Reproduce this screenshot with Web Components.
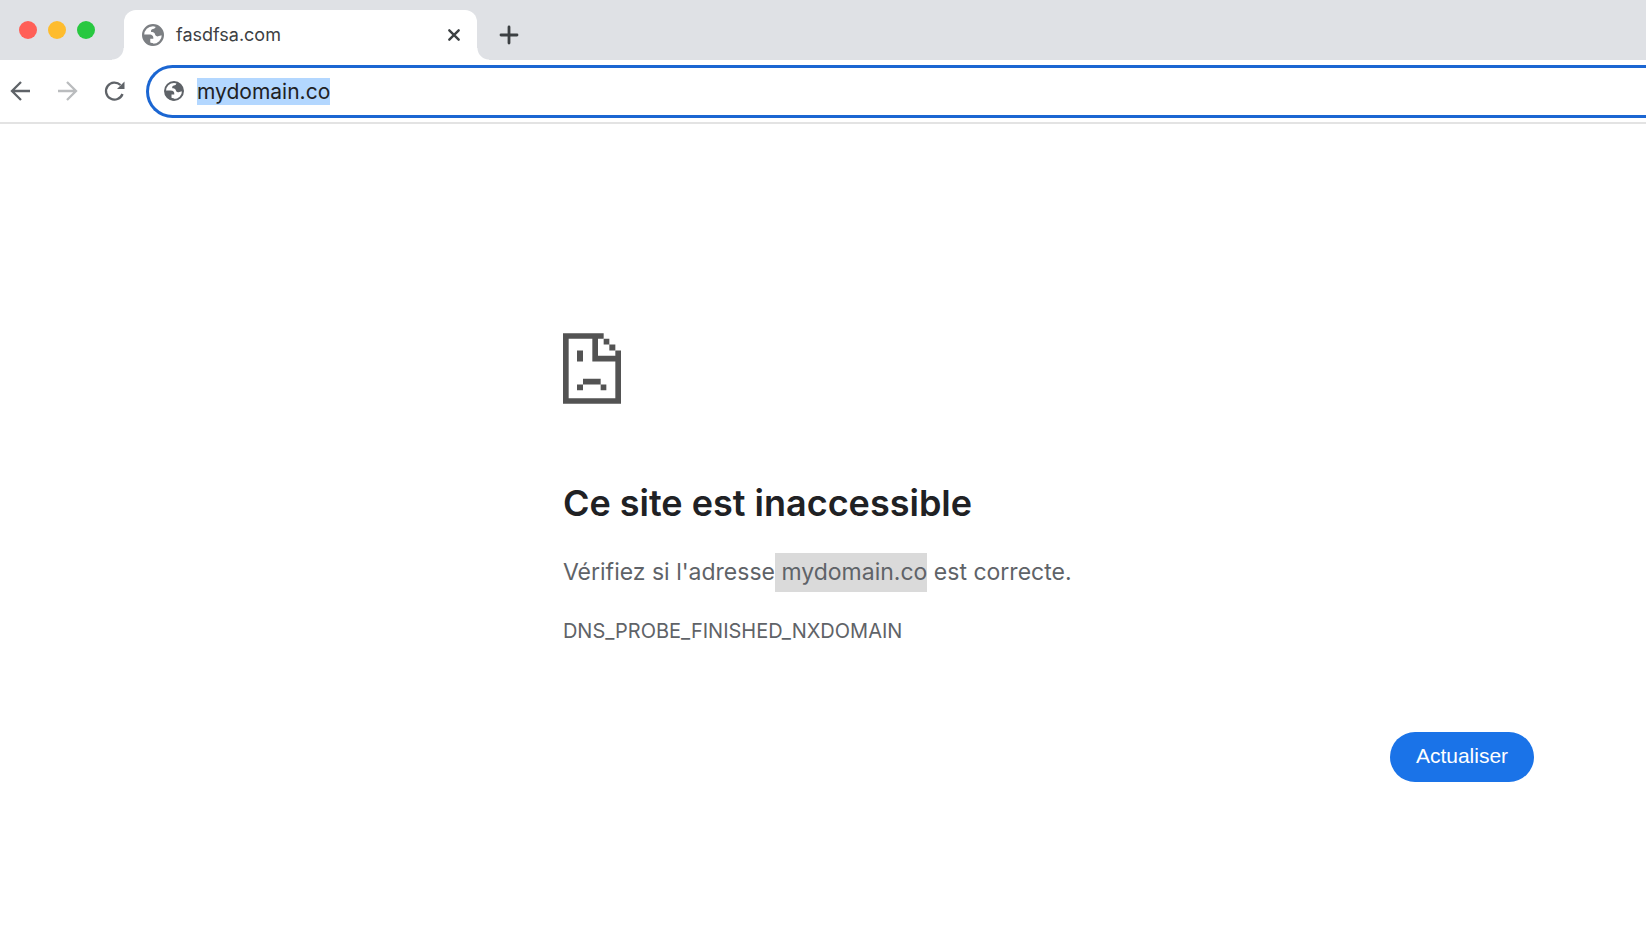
<!DOCTYPE html>
<html lang="fr">
<head>
<meta charset="utf-8">
<title>fasdfsa.com</title>
<style>
  body { margin: 0; background: #fff; font-family: Inter, "Liberation Sans", sans-serif; color: #202124; }
</style>
</head>
<body>
<browser-window>
  <tab-strip slot="tabs"><browser-tab>fasdfsa.com</browser-tab></tab-strip>
  <nav-toolbar slot="toolbar"><address-bar value="mydomain.co"></address-bar></nav-toolbar>
  <error-page>
    <span slot="title">Ce site est inaccessible</span>
    <span slot="summary">Vérifiez si l'adresse<mark-host>&nbsp;mydomain.co</mark-host> est correcte.</span>
    <span slot="code">DNS_PROBE_FINISHED_NXDOMAIN</span>
    <reload-button slot="action">Actualiser</reload-button>
  </error-page>
</browser-window>
<script>
const define = (name, html, setup) => {
  const template = document.createElement('template');
  template.innerHTML = html;
  customElements.define(name, class extends HTMLElement {
    constructor() {
      super();
      this.attachShadow({ mode: 'open' }).append(template.content.cloneNode(true));
    }
    connectedCallback() { if (setup) setup(this); }
  });
};

define('globe-icon', `
  <style>
    :host { display: block; flex: none; width: 20px; height: 20px; color: #5f6368; }
    svg { display: block; width: 100%; height: 100%; }
  </style>
  <svg viewBox="0 0 20 20" aria-hidden="true">
    <circle cx="10" cy="10" r="9" fill="#fff" stroke="currentColor" stroke-width="2"/>
    <path fill="currentColor" d="M1 9.500H6.500C9.500 9.500 10.500 11 10.300 13.500H7.500V16.800C8.500 17.300 9.500 17.500 10.500 17.500L9 19.500C4 18.500 1 15 1 9.500Z"/>
    <path fill="currentColor" d="M12.500 1.500C12.500 3.500 11.500 4.200 9.800 4.500C8.300 4.800 8 6 8.300 7.200C9.500 7.200 11 7.500 11.500 8.500C12 10 12.500 11.300 14 11.300C15.300 11.300 15.500 10 18.500 10.500C19.500 6 16.500 2.500 12.500 1.500Z"/>
  </svg>`);

define('tab-strip', `
  <style>
    :host { display: flex; height: 50px; padding-top: 10px; background: #dfe1e5; }
    .lights { display: flex; gap: 11px; padding: 11px 29px 0 19px; }
    .lights i { width: 18px; height: 18px; border-radius: 50%; }
    .close { background: #ff5f57; } .min { background: #febc2e; } .max { background: #28c840; }
    button { align-self: center; margin-left: 22px; padding: 0; border: 0; background: none; color: #3c4043; }
    svg { display: block; width: 20px; height: 20px; }
  </style>
  <div class="lights"><i class="close"></i><i class="min"></i><i class="max"></i></div>
  <slot></slot>
  <button aria-label="Nouvel onglet"><svg viewBox="0 0 20 20" stroke="currentColor" stroke-width="2.800" stroke-linecap="round"><path d="M10 2V18M2 10H18"/></svg></button>`);

define('browser-tab', `
  <style>
    :host { position: relative; display: flex; align-items: center; box-sizing: border-box; width: 353px; padding: 0 16px 0 18px;
      background: #fff; border-radius: 12px 12px 0 0; color: #3c4043; font-size: 18px; line-height: 24px; }
    :host::before, :host::after { content: ""; position: absolute; bottom: 0; width: 12px; height: 12px; }
    :host::before { right: 100%; background: radial-gradient(circle at 0 0, transparent 11px, #fff 12px); }
    :host::after { left: 100%; background: radial-gradient(circle at 100% 0, transparent 11px, #fff 12px); }
    globe-icon { width: 22px; height: 22px; margin-right: 12px; color: #7c7f83; }
    .title { flex: 1; }
    button { padding: 0; border: 0; background: none; color: #3c4043; }
    svg { display: block; width: 14px; height: 14px; }
  </style>
  <globe-icon></globe-icon><span class="title"><slot></slot></span>
  <button aria-label="Fermer"><svg viewBox="0 0 14 14" stroke="currentColor" stroke-width="2.400" stroke-linecap="round"><path d="M2.300 2.300L11.700 11.700M11.700 2.300L2.300 11.700"/></svg></button>`);

define('nav-toolbar', `
  <style>
    :host { display: flex; align-items: center; height: 62px; padding-left: 10px; background: #fff; border-bottom: 2px solid #e3e3e3; }
    button { flex: none; margin-right: 26px; padding: 0; border: 0; background: none; color: #5f6368; }
    button:disabled { color: #babcbe; }
    button:last-of-type { margin-right: 21px; }
    svg { display: block; width: 21px; height: 22px; fill: none; stroke: currentColor; stroke-width: 2.300; }
  </style>
  <button aria-label="Retour"><svg viewBox="0 0 21 22"><path d="M20 11H2.500M11 2L2 11L11 20"/></svg></button>
  <button aria-label="Avancer" disabled><svg viewBox="0 0 21 22"><path d="M1 11H18.500M10 2L19 11L10 20"/></svg></button>
  <button aria-label="Actualiser la page"><svg viewBox="0 0 21 22"><path d="M18.500 14A8.500 8.500 0 1 1 16.500 5"/><path d="M20.500 1.500V9H13Z" fill="currentColor" stroke="none"/></svg></button>
  <slot></slot>`);

define('address-bar', `
  <style>
    :host { display: flex; align-items: center; flex: 1; box-sizing: border-box; height: 53px; padding-left: 15px;
      border: 3px solid #1b66d2; border-right: 0; border-radius: 27px 0 0 27px; }
    input { flex: 1; min-width: 0; margin-left: 13px; padding: 0; border: 0; outline: 0; background: none;
      color: #202124; font: inherit; font-size: 21px; line-height: 27px; height: 27px; }
    input::selection { background: #b3d7ff; color: #202124; }
  </style>
  <globe-icon></globe-icon><input type="text" aria-label="Adresse">`,
  host => {
    const input = host.shadowRoot.querySelector('input');
    input.value = host.getAttribute('value');
    input.focus();
    input.select();
  });

define('mark-host', `
  <style>:host { display: inline-block; background: #dadada; line-height: 39px; }</style><slot></slot>`);

define('reload-button', `
  <style>
    :host { display: block; }
    button { display: block; height: 50px; padding: 0 26px 2px; border: 0; border-radius: 25px; background: #1a73e8;
      color: #fff; font: 21px/26px "Liberation Sans", sans-serif; }
  </style>
  <button><slot></slot></button>`);

define('error-page', `
  <style>
    :host { display: block; padding: 209px 6.8% 40px 34.2%; color: #5f6368; }
    svg { display: block; width: 58px; height: 71px; margin-bottom: 74px; fill: #535353; }
    h1 { margin: 0 0 25px; color: #202124; font-size: 36px; font-weight: 600; line-height: 50px; }
    p { margin: 0; font-size: 23px; line-height: 39px; }
    .code { margin: 26px 0 88px; font-size: 20px; line-height: 26px; }
    .actions { display: flex; justify-content: flex-end; }
  </style>
  <svg viewBox="0 0 174 212" aria-hidden="true">
    <path fill-rule="evenodd" d="M0 0H122V17H105V68H157V52H174V212H0ZM17 17V195H157V85H88V17Z"/>
    <path d="M122 17h17v17h-17zM139 34h18v18h-18zM42 52h18v33h-18zM60 137h53v17h17v17h-17v-17H60v17H42v-17h18z"/>
  </svg>
  <h1><slot name="title"></slot></h1>
  <p><slot name="summary"></slot></p>
  <p class="code"><slot name="code"></slot></p>
  <div class="actions"><slot name="action"></slot></div>`);

define('browser-window', `
  <style>:host { display: block; overflow: hidden; }</style>
  <slot name="tabs"></slot><slot name="toolbar"></slot><main><slot></slot></main>`);
</script>
</body>
</html>
